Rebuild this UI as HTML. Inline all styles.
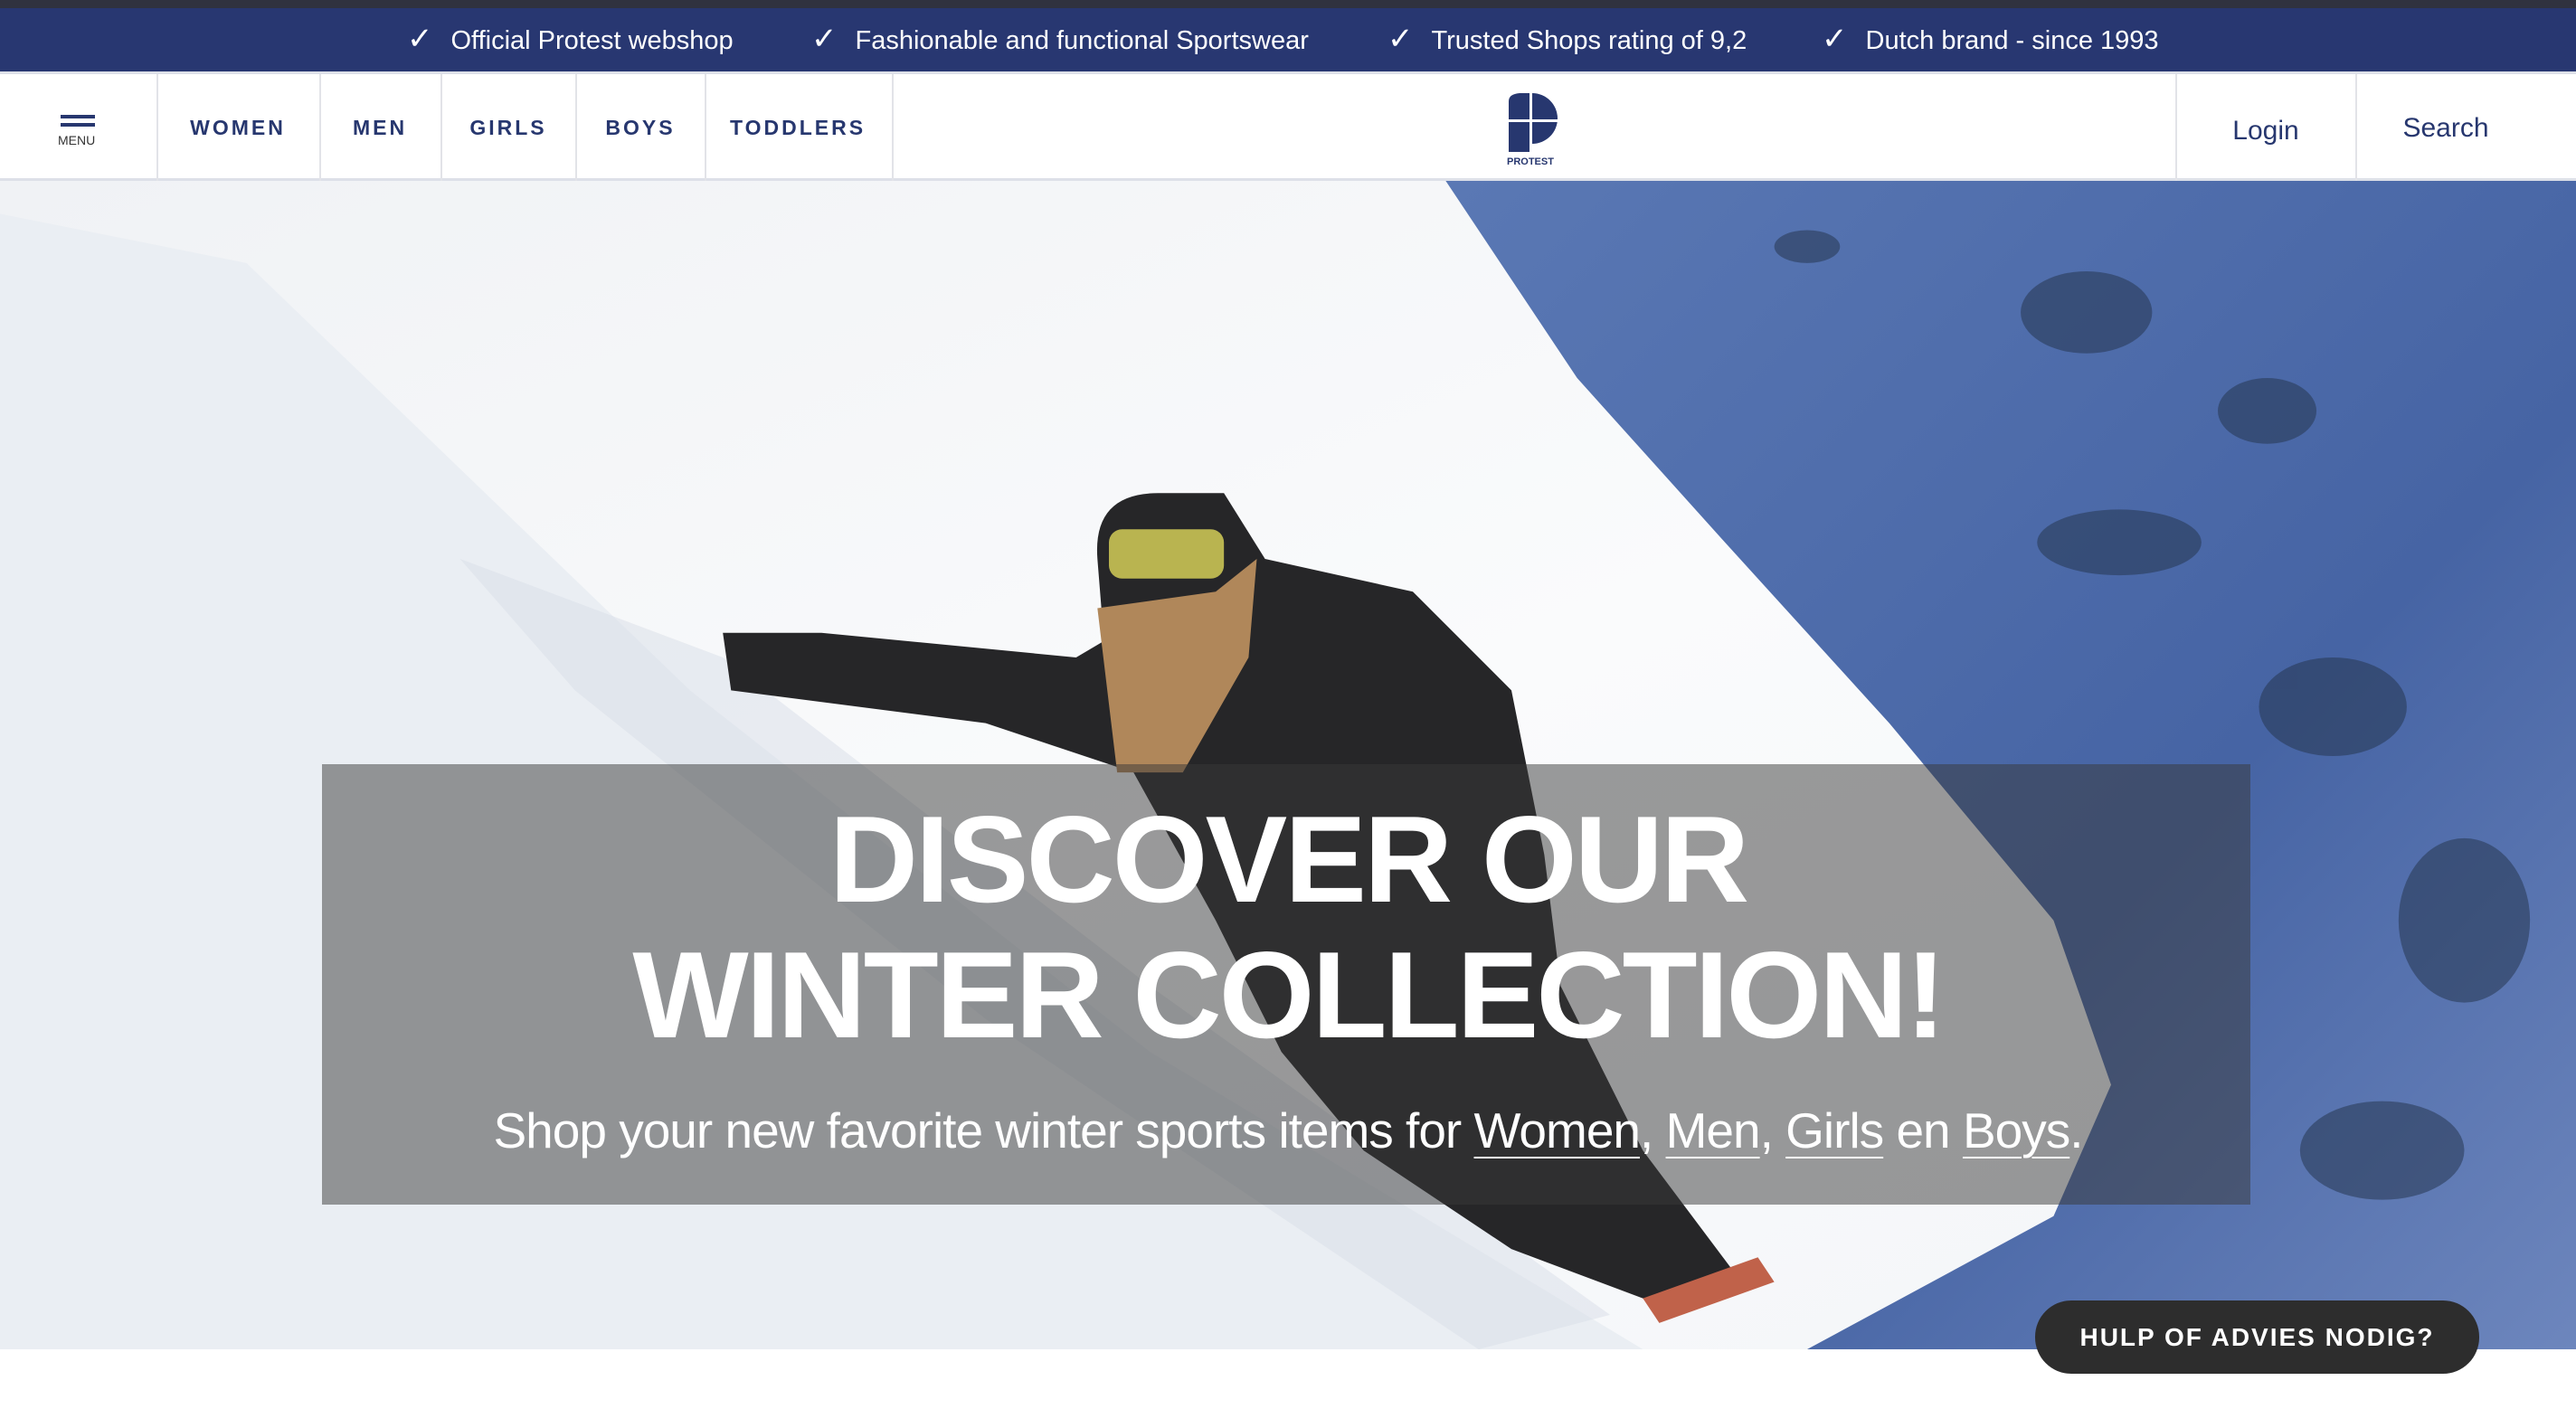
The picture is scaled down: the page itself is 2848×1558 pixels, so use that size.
<!DOCTYPE html>
<html><head><meta charset="utf-8">
<style>
*{margin:0;padding:0;box-sizing:border-box}
body{width:2848px;height:1558px;overflow:hidden;background:#fff;font-family:"Liberation Sans",sans-serif;position:relative}
.top{position:absolute;left:0;top:0;width:2848px;height:9px;background:#30323f}
.usp{position:absolute;left:0;top:9px;width:2848px;height:70px;background:#283771;color:#fff;font-size:29px}
.usp span{position:absolute;top:14px;white-space:nowrap}
.usp b{font-weight:normal;font-size:34px;margin-right:20px}
.nav{position:absolute;left:0;top:79px;width:2848px;height:121px;background:#fff;border-top:3px solid #dde0e8;border-bottom:3px solid #dde0e8}
.d{position:absolute;top:0;width:2px;height:118px;background:#e2e3e8}
.n{position:absolute;top:46px;font-size:23px;font-weight:bold;color:#27376f;letter-spacing:3px;transform:translateX(-50%)}
.r{position:absolute;font-size:30px;color:#27376f;transform:translateX(-50%)}
.hero{position:absolute;left:0;top:200px;width:2848px;height:1292px;overflow:hidden}
.ov{position:absolute;left:356px;top:645px;width:2132px;height:487px;background:rgba(55,55,55,0.5)}
h1{position:absolute;left:0;width:2848px;top:875px;text-align:center;color:#fff;font-size:136px;line-height:150px;font-weight:bold;letter-spacing:-3px}
.sub{position:absolute;left:0;width:2848px;top:1218px;text-align:center;color:#fff;font-size:55px;letter-spacing:-1px}
.sub u{text-decoration:underline;text-decoration-thickness:2px;text-underline-offset:10px}
.chat{position:absolute;left:2250px;top:1438px;width:491px;height:81px;border-radius:40px;background:#2d2d2d;color:#fff;font-weight:bold;font-size:28px;letter-spacing:2px;text-align:center;line-height:81px}
</style></head><body>
<div class="top"></div>
<div class="usp">
<span style="left:450px"><b>✓</b>Official Protest webshop</span>
<span style="left:897px"><b>✓</b>Fashionable and functional Sportswear</span>
<span style="left:1534px"><b>✓</b>Trusted Shops rating of 9,2</span>
<span style="left:2014px"><b>✓</b>Dutch brand - since 1993</span>
</div>
<div class="nav">
<div style="position:absolute;left:67px;top:45px;width:38px;height:4px;background:#27376f"></div>
<div style="position:absolute;left:67px;top:54px;width:38px;height:4px;background:#27376f"></div>
<div style="position:absolute;left:64px;top:65px;font-size:14px;color:#333">MENU</div>
<div class="d" style="left:173px"></div><div class="d" style="left:353px"></div><div class="d" style="left:487px"></div><div class="d" style="left:636px"></div><div class="d" style="left:779px"></div><div class="d" style="left:986px"></div>
<div class="d" style="left:2405px"></div><div class="d" style="left:2604px"></div>
<div class="n" style="left:263px">WOMEN</div>
<div class="n" style="left:420px">MEN</div>
<div class="n" style="left:562px">GIRLS</div>
<div class="n" style="left:708px">BOYS</div>
<div class="n" style="left:882px">TODDLERS</div>
<svg style="position:absolute;left:1666px;top:20px" width="60" height="84" viewBox="0 0 60 84">
<path d="M2 10 Q2 2 14 1 L28 1 A28 28 0 0 1 28 57 L28 66 L2 66 Z" fill="#27376f"/>
<rect x="25" y="0" width="3" height="68" fill="#fff"/><rect x="0" y="30" width="58" height="3" fill="#fff"/>
<text x="0" y="80" font-size="11" font-weight="bold" fill="#27376f" font-family="Liberation Sans">PROTEST</text>
</svg>
<div class="r" style="left:2505px;top:46px">Login</div>
<div class="r" style="left:2704px;top:43px">Search</div>
</div>
<div class="hero">
<svg width="2848" height="1292" viewBox="0 110 1568 711" preserveAspectRatio="none">
<defs>
<linearGradient id="sn" x1="0" y1="0" x2="1" y2="1"><stop offset="0" stop-color="#f0f2f5"/><stop offset="0.5" stop-color="#fafbfc"/><stop offset="1" stop-color="#f3f5f8"/></linearGradient>
<linearGradient id="bl" x1="0" y1="0" x2="1" y2="1"><stop offset="0" stop-color="#5a78b4"/><stop offset="0.6" stop-color="#4664a4"/><stop offset="1" stop-color="#6d86bd"/></linearGradient>
</defs>
<rect x="0" y="110" width="1568" height="711" fill="url(#sn)"/>
<path d="M0 130 L150 160 L420 420 L700 640 L1000 821 L0 821Z" fill="#eaeef3"/>
<path d="M280 340 L440 400 L700 600 L980 800 L900 821 L600 620 L350 420Z" fill="#d7dee8" opacity="0.5"/>
<path d="M880 110 L1568 110 L1568 821 L1100 821 L1250 740 L1285 660 L1250 560 L1150 440 L1050 330 L960 230Z" fill="url(#bl)"/>
<g fill="#263650" opacity="0.55">
<ellipse cx="1270" cy="190" rx="40" ry="25"/><ellipse cx="1290" cy="330" rx="50" ry="20"/><ellipse cx="1420" cy="430" rx="45" ry="30"/><ellipse cx="1500" cy="560" rx="40" ry="50"/><ellipse cx="1450" cy="700" rx="50" ry="30"/><ellipse cx="1380" cy="250" rx="30" ry="20"/><ellipse cx="1100" cy="150" rx="20" ry="10"/>
</g>
<path d="M705 300 Q665 300 668 340 L672 390 L655 400 L500 385 L440 385 L445 420 L600 440 L690 470 L740 560 L780 640 L830 700 L920 760 L1000 790 L1060 780 L1000 700 L950 600 L940 520 L920 420 L860 360 L770 340 L745 300Z" fill="#262628"/>
<path d="M668 370 L680 470 L720 470 L760 400 L765 340 L740 360Z" fill="#b0875a"/>
<rect x="675" y="322" width="70" height="30" rx="8" fill="#b9b450"/>
<path d="M1000 790 L1070 765 L1080 780 L1010 805Z" fill="#c0624a"/>
</svg>
<div class="ov"></div>
</div>
<h1>DISCOVER OUR<br>WINTER COLLECTION!</h1>
<div class="sub">Shop your new favorite winter sports items for <u>Women</u>, <u>Men</u>, <u>Girls</u> en <u>Boys</u>.</div>
<div class="chat">HULP OF ADVIES NODIG?</div>
</body></html>
